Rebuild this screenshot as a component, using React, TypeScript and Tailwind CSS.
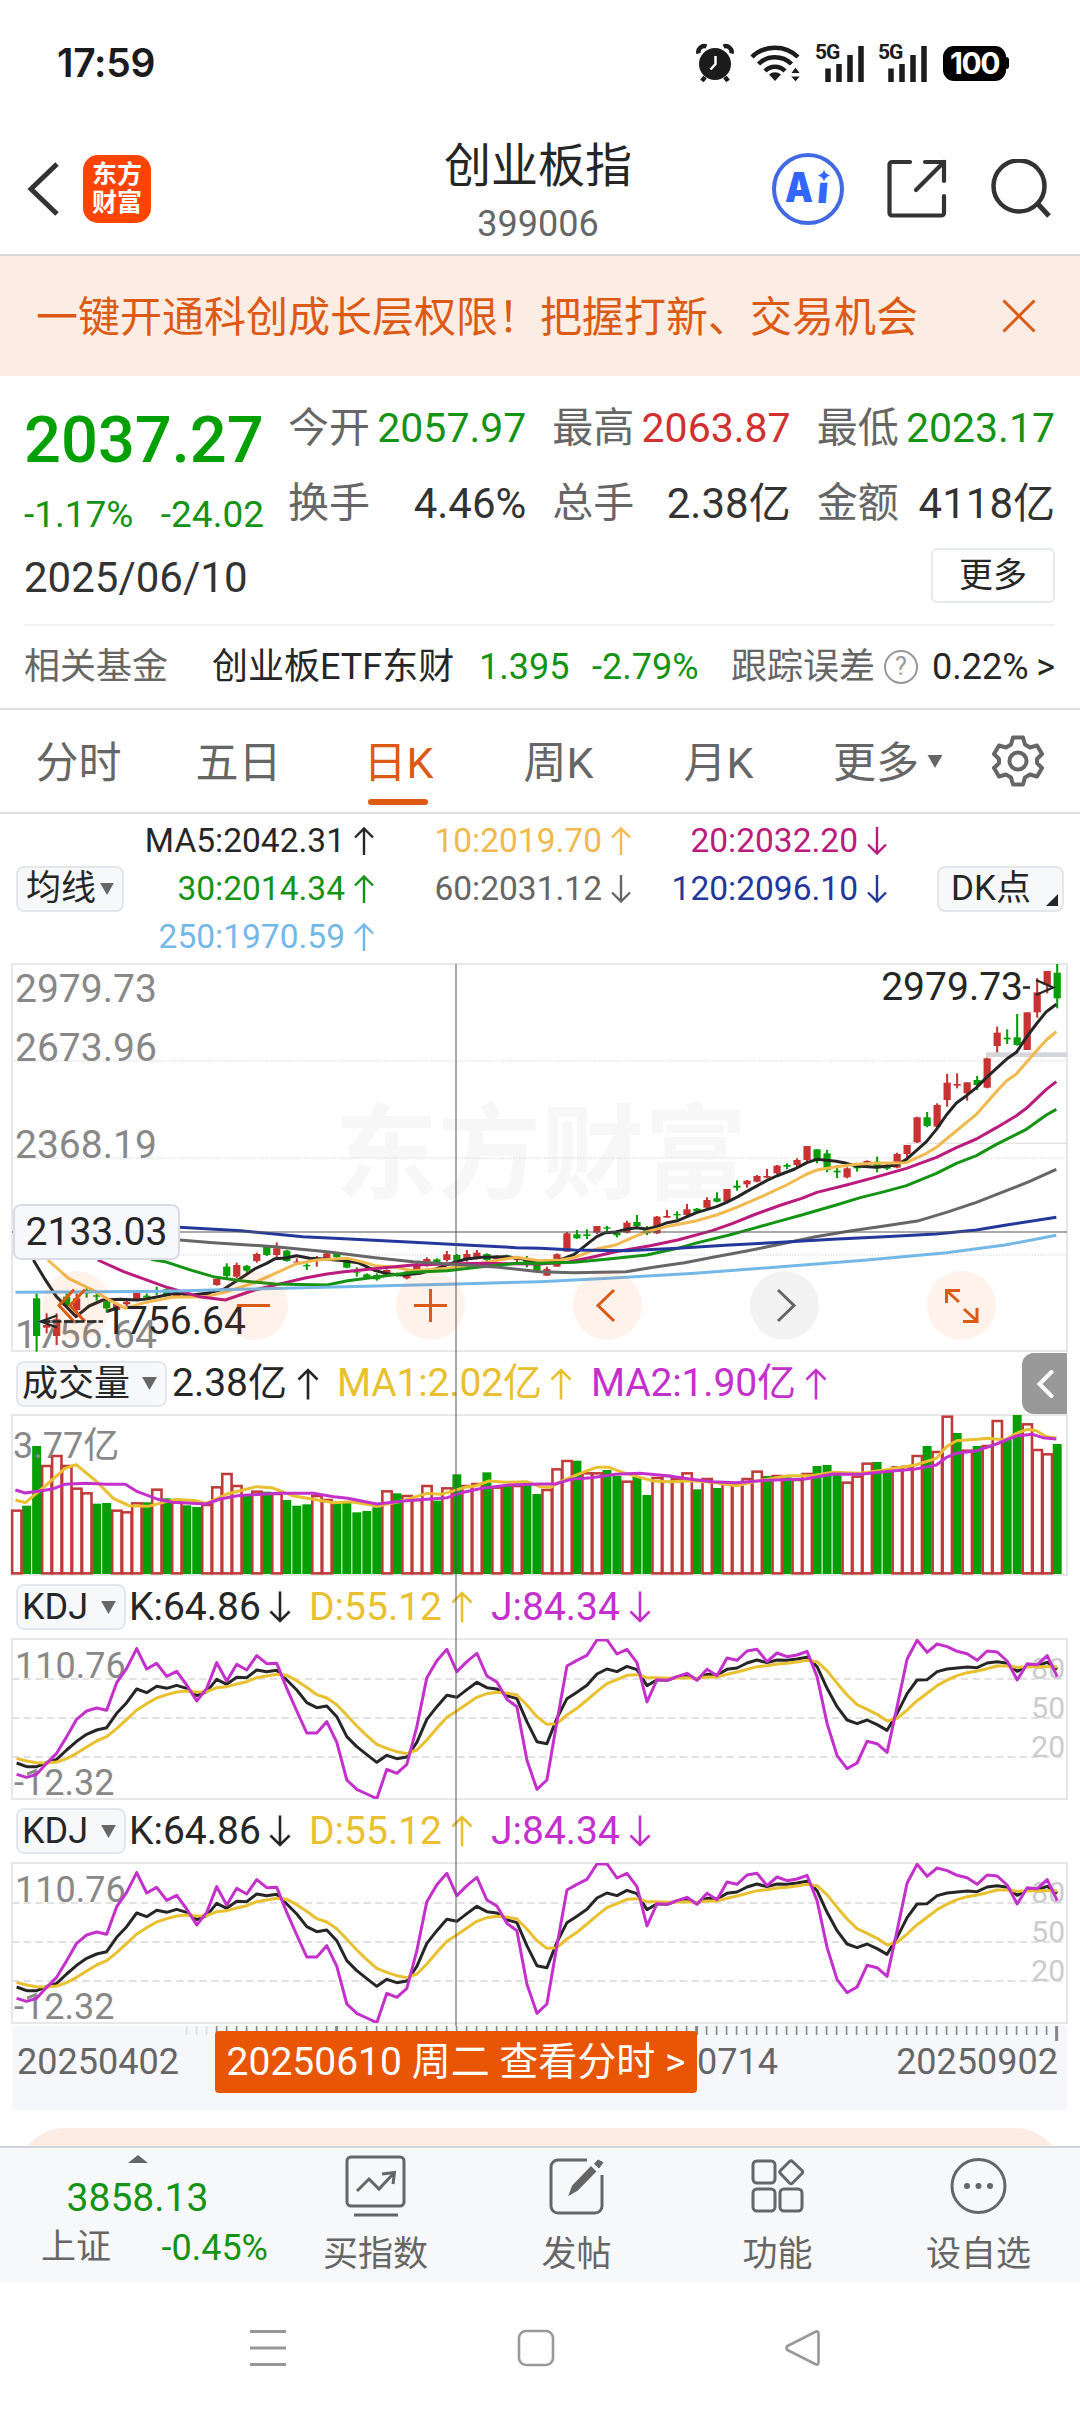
import type { ReactNode } from 'react'

// Chart coordinates: one trading day every STEP units, first day at X0.
// HALF is where the second half of the hand-kept line data starts.
const X0 = 49.4
const STEP = 29.04
const HALF = 1568

const xAt = (i: number) => X0 + STEP * i

type Candle = [up: 0 | 1, top: number, bottom: number, high: number, low: number]

// first candle is day 2
const CANDLES: Candle[] = [
  [0, 1045, 1158, 1030, 1205], [1, 1125, 1133, 1090, 1150], [1, 1108, 1158, 1090, 1185], [0, 1040, 1068, 1030, 1070],
  [1, 1045, 1080, 1030, 1090], [0, 1020, 1030, 1015, 1043], [0, 1036, 1040, 1030, 1052], [0, 1055, 1075, 1048, 1088],
  [1, 1062, 1080, 1062, 1080], [1, 1055, 1063, 1048, 1070], [1, 1028, 1052, 1028, 1052], [0, 1037, 1042, 1030, 1048],
  [0, 1020, 1023, 1010, 1035], [0, 1018, 1032, 1015, 1035], [1, 1030, 1038, 1030, 1040], [1, 1032, 1040, 1032, 1040],
  [1, 1036, 1044, 1036, 1044], [1, 1028, 1036, 1028, 1038], [1, 987, 1005, 985, 1007], [0, 950, 978, 940, 988],
  [1, 945, 980, 938, 985], [0, 948, 962, 945, 968], [1, 912, 933, 908, 938], [0, 890, 915, 888, 918],
  [1, 895, 915, 877, 922], [0, 902, 933, 900, 935], [1, 935, 938, 925, 942], [0, 945, 949, 940, 960],
  [1, 928, 932, 918, 950], [1, 910, 924, 905, 928], [0, 910, 922, 910, 924], [0, 930, 953, 928, 955],
  [0, 965, 968, 952, 980], [0, 973, 982, 970, 987], [0, 975, 988, 970, 992], [1, 960, 978, 958, 980],
  [0, 970, 978, 968, 980], [1, 965, 985, 962, 988], [1, 942, 962, 940, 966], [1, 927, 948, 922, 950],
  [0, 928, 940, 925, 945], [1, 913, 930, 903, 935], [0, 915, 935, 912, 938], [1, 912, 928, 900, 935],
  [1, 908, 922, 900, 928], [0, 912, 930, 910, 934], [1, 918, 928, 916, 930], [0, 916, 922, 914, 926],
  [1, 922, 930, 918, 938], [0, 925, 945, 918, 952], [0, 935, 965, 930, 968], [1, 957, 977, 950, 978],
  [1, 913, 950, 910, 950], [1, 850, 905, 846, 905], [0, 853, 865, 840, 867], [0, 853, 858, 838, 867],
  [1, 828, 848, 828, 852], [0, 832, 836, 828, 845], [0, 848, 856, 840, 862], [1, 818, 848, 812, 850],
  [0, 816, 828, 795, 835], [0, 835, 850, 828, 855], [1, 800, 850, 798, 852], [1, 798, 803, 780, 803],
  [0, 792, 796, 784, 808], [1, 778, 795, 762, 802], [0, 776, 785, 774, 787], [1, 750, 773, 742, 775],
  [0, 745, 755, 727, 757], [1, 717, 755, 717, 757], [0, 707, 713, 691, 722], [1, 692, 703, 690, 713],
  [1, 678, 695, 675, 697], [1, 678, 683, 657, 685], [1, 647, 670, 645, 672], [0, 645, 650, 640, 657],
  [1, 630, 645, 625, 655], [1, 588, 630, 588, 636], [0, 598, 630, 598, 640], [0, 610, 660, 600, 667],
  [0, 662, 667, 645, 684], [1, 655, 682, 652, 685], [0, 645, 655, 642, 665], [1, 633, 645, 631, 648],
  [0, 635, 655, 620, 667], [0, 645, 656, 642, 660], [1, 612, 653, 608, 655], [1, 585, 612, 585, 630],
  [1, 502, 577, 500, 579], [0, 502, 528, 486, 532], [1, 465, 530, 460, 532], [1, 398, 450, 372, 470],
  [1, 402, 407, 370, 415], [1, 397, 430, 397, 452], [0, 390, 405, 378, 420], [1, 325, 413, 323, 415],
  [1, 248, 288, 230, 307], [0, 263, 268, 238, 282], [0, 262, 285, 192, 287], [1, 187, 300, 187, 300],
  [1, 127, 187, 85, 203], [1, 63, 105, 63, 130], [0, 68, 145, 42, 175],
]

const MA_LINES: { color: string; left: number[]; right: number[] }[] = [
  {
    color: '#262626',
    left: [98, 930, 130, 985, 165, 1040, 222, 1100, 260, 1068, 300, 1050, 350, 1048, 400, 1050, 430, 1046, 510, 1030, 560, 1035, 600, 1030, 650, 1018, 700, 985, 740, 957, 775, 940, 800, 926, 830, 924, 862, 917, 900, 925, 950, 928, 1000, 932, 1040, 938, 1090, 962, 1130, 972, 1170, 975, 1220, 970, 1270, 955, 1310, 940, 1355, 927, 1400, 922, 1470, 920, 1510, 925, 1568, 940],
    right: [40, 935, 70, 925, 100, 913, 140, 880, 165, 860, 190, 848, 220, 846, 250, 838, 280, 833, 310, 837, 340, 830, 370, 818, 400, 812, 455, 788, 513, 770, 542, 757, 575, 740, 600, 725, 658, 692, 687, 678, 740, 657, 775, 638, 804, 628, 860, 634, 890, 640, 920, 648, 977, 652, 1035, 645, 1064, 628, 1122, 575, 1151, 538, 1180, 495, 1209, 459, 1238, 437, 1267, 413, 1296, 383, 1354, 328, 1383, 307, 1412, 262, 1441, 222, 1470, 185, 1499, 163],
  },
  {
    color: '#f1b94f',
    left: [140, 930, 200, 985, 270, 1020, 310, 1045, 365, 1075, 420, 1058, 500, 1042, 600, 1040, 660, 1025, 740, 998, 800, 970, 860, 942, 920, 930, 1010, 925, 1050, 935, 1090, 947, 1150, 952, 1200, 962, 1300, 955, 1400, 940, 1450, 930, 1500, 922, 1568, 932],
    right: [60, 930, 100, 923, 165, 897, 220, 885, 270, 862, 310, 845, 380, 827, 455, 812, 513, 795, 571, 772, 650, 737, 716, 705, 775, 672, 804, 660, 861, 650, 920, 643, 970, 640, 1064, 638, 1122, 610, 1151, 592, 1180, 567, 1267, 493, 1325, 425, 1354, 393, 1383, 372, 1441, 303, 1470, 270, 1499, 245],
  },
  {
    color: '#ba1b7c',
    left: [285, 930, 360, 965, 480, 1010, 580, 1040, 655, 1050, 740, 1020, 820, 1000, 890, 983, 950, 972, 1000, 965, 1100, 955, 1200, 945, 1300, 942, 1400, 940, 1568, 942],
    right: [80, 937, 150, 922, 220, 905, 320, 887, 400, 870, 500, 842, 560, 820, 620, 795, 700, 765, 760, 745, 804, 727, 890, 705, 970, 683, 1064, 655, 1151, 622, 1209, 593, 1267, 567, 1325, 533, 1383, 497, 1412, 475, 1470, 418, 1499, 395],
  },
  {
    color: '#159315',
    left: [440, 928, 480, 935, 560, 962, 620, 980, 700, 992, 800, 1002, 950, 1005, 1010, 992, 1100, 980, 1200, 967, 1300, 962, 1400, 950, 1500, 940, 1568, 940],
    right: [100, 937, 200, 927, 310, 915, 400, 895, 450, 880, 550, 855, 620, 835, 690, 815, 760, 795, 860, 765, 930, 743, 1000, 725, 1064, 707, 1151, 670, 1209, 640, 1267, 617, 1325, 583, 1383, 553, 1412, 538, 1470, 495, 1499, 478],
  },
  {
    color: '#666666',
    left: [522, 870, 620, 878, 800, 890, 950, 905, 1090, 923, 1200, 935, 1350, 945, 1450, 952, 1568, 965],
    right: [100, 968, 250, 965, 330, 952, 420, 938, 510, 920, 600, 903, 700, 882, 800, 860, 900, 843, 1000, 828, 1100, 812, 1180, 787, 1267, 757, 1354, 722, 1420, 695, 1499, 658],
  },
  {
    color: '#24389c',
    left: [522, 832, 700, 842, 880, 860, 1000, 866, 1200, 877, 1350, 885, 1500, 893, 1568, 895],
    right: [100, 900, 250, 902, 400, 895, 550, 885, 700, 877, 850, 868, 1000, 860, 1150, 852, 1267, 840, 1354, 825, 1499, 802],
  },
  {
    color: '#74b8e8',
    left: [46, 1027, 300, 1025, 480, 1024, 700, 1018, 1000, 1010, 1300, 1003, 1568, 995],
    right: [200, 985, 450, 970, 700, 950, 950, 930, 1180, 908, 1350, 885, 1499, 856],
  },
]

// volume bar tops, negative = falling day
const VOLUME = [
  482, -467, -288, 348, 318, 348, 416, 430, -461, -459, 482, 487, 460, -457, 419, -445, 457, -466, -471, 465, 412, 372,
  408, -435, 425, -425, 432, -450, -467, -463, 438, 450, -458, -457, -487, -483, -472, 424, -430, 438, 450, 408, -452,
  415, -373, 408, 402, -367, 413, -405, 408, -395, -432, 420, 358, 333, -332, 370, 370, -360, -378, 395, -380, -435,
  384, 378, 388, 370, -418, 387, -414, 402, 402, 387, 365, -378, 378, -382, 390, 372, -348, -345, -375, 398, 380, 341,
  -336, -358, 352, 350, 318, -288, 306, 200, -249, 302, -288, 288, 213, -268, -195, 223, 300, 313, -282,
]

const VOLUME_LINES = [
  {
    color: '#e8c030',
    left: [46, 450, 75, 458, 130, 410, 190, 355, 222, 344, 280, 393, 330, 445, 375, 467, 430, 469, 510, 448, 570, 452, 600, 460, 660, 432, 745, 410, 790, 413, 850, 437, 970, 458, 1020, 455, 1095, 468, 1160, 455, 1200, 443, 1240, 430, 1280, 433, 1310, 425, 1350, 412, 1380, 408, 1420, 393, 1470, 397, 1530, 395, 1568, 410],
    right: [30, 412, 60, 395, 130, 365, 165, 352, 200, 352, 240, 367, 290, 382, 330, 393, 380, 395, 440, 392, 500, 397, 570, 407, 620, 395, 720, 377, 790, 377, 850, 367, 930, 370, 1000, 360, 1090, 345, 1151, 325, 1180, 290, 1209, 272, 1270, 268, 1300, 265, 1350, 270, 1383, 250, 1415, 238, 1441, 242, 1470, 260, 1499, 263],
  },
  {
    color: '#c430cc',
    left: [46, 420, 75, 429, 150, 418, 190, 403, 250, 400, 310, 403, 365, 403, 400, 425, 460, 448, 500, 457, 600, 462, 640, 447, 690, 437, 810, 430, 910, 430, 970, 440, 1010, 445, 1095, 462, 1180, 452, 1240, 448, 1300, 443, 1340, 428, 1400, 415, 1480, 405, 1568, 402],
    right: [45, 402, 90, 388, 150, 383, 220, 373, 290, 370, 370, 377, 440, 388, 500, 395, 570, 398, 640, 392, 770, 387, 850, 372, 930, 373, 1000, 365, 1090, 357, 1151, 345, 1180, 322, 1209, 310, 1270, 302, 1325, 282, 1383, 258, 1430, 253, 1460, 263, 1499, 267],
  },
]

const KDJ_LINES = [
  {
    color: '#262626',
    ys: [549, 560, 560, 548, 538, 510, 484, 463, 450, 443, 400, 368, 327, 338, 319, 325, 316, 325, 347, 335, 298, 313, 292, 293, 270, 275, 271, 300, 330, 368, 383, 378, 410, 470, 500, 524, 547, 526, 536, 531, 487, 418, 380, 346, 352, 329, 307, 323, 327, 347, 356, 425, 485, 491, 415, 356, 337, 316, 282, 267, 275, 259, 269, 317, 299, 301, 291, 286, 298, 283, 285, 268, 264, 249, 240, 248, 240, 241, 237, 232, 260, 325, 380, 420, 431, 420, 434, 451, 400, 341, 300, 299, 275, 267, 264, 261, 263, 249, 245, 250, 274, 258, 257, 247, 268],
  },
  {
    color: '#e8c030',
    ys: [535, 543, 548, 549, 546, 536, 520, 501, 483, 470, 446, 418, 390, 371, 354, 344, 336, 333, 336, 335, 323, 320, 312, 305, 293, 288, 283, 286, 302, 322, 344, 354, 374, 406, 438, 467, 493, 505, 515, 521, 510, 480, 445, 412, 393, 372, 352, 341, 337, 339, 345, 375, 410, 433, 431, 405, 385, 360, 335, 311, 299, 286, 284, 293, 293, 295, 294, 293, 295, 291, 291, 283, 276, 268, 260, 257, 252, 250, 246, 241, 245, 272, 310, 345, 374, 388, 403, 423, 415, 390, 362, 340, 317, 300, 287, 278, 273, 266, 258, 258, 262, 261, 260, 260, 260],
  },
  {
    color: '#c430cc',
    ys: [583, 592, 583, 550, 520, 470, 418, 393, 384, 391, 308, 265, 206, 267, 250, 289, 274, 315, 363, 325, 248, 303, 253, 270, 227, 251, 250, 325, 393, 459, 459, 425, 487, 600, 628, 642, 656, 568, 580, 553, 440, 293, 242, 208, 275, 245, 220, 288, 306, 358, 380, 540, 628, 600, 425, 258, 241, 226, 180, 179, 222, 208, 248, 366, 299, 301, 290, 280, 301, 268, 287, 234, 241, 213, 208, 245, 219, 230, 225, 214, 290, 430, 527, 566, 549, 484, 491, 517, 380, 237, 181, 217, 192, 200, 214, 221, 241, 213, 216, 243, 300, 251, 254, 227, 290],
  },
]

const pair = (values: number[], shift: number) =>
  values.map((v, i) => (i % 2 === 0 ? v + shift : v)).join(' ')

function Line({ points, color }: { points: string; color: string }) {
  return (
    <polyline
      points={points}
      fill="none"
      stroke={color}
      strokeWidth="3"
      strokeLinejoin="round"
      vectorEffect="non-scaling-stroke"
    />
  )
}

function Arrow({ down = false }: { down?: boolean }) {
  return (
    <svg viewBox="0 0 22 32" className="h-8 w-[22px] shrink-0" fill="none" stroke="currentColor" strokeWidth="2.6">
      <path d={down ? 'M11 0.5V30M1.5 20.5L11 30L20.500 20.5' : 'M11 31.5V2M1.500 11.5L11 2L20.500 11.5'} />
    </svg>
  )
}

function StatusBar() {
  return (
    <div className="flex h-[126px] items-center pl-[57px] pr-[71px] text-[#1c1c1c]">
      <span className="font-['Inter'] text-[39px] font-semibold tracking-[-0.3px]">17:59</span>
      <svg viewBox="0 0 38 40" className="ml-auto h-10 w-[38px]">
        <circle cx="19" cy="21" r="16" fill="#1c1c1c" />
        <path d="M2.500 10.500a6 6 0 0 1 8-7M35.500 10.500a6 6 0 0 0-8-7M9 34l-3 4M29 34l3 4" stroke="#1c1c1c" strokeWidth="4.500" fill="none" />
        <path d="M19.500 13v8l-5 5.500" stroke="#fff" strokeWidth="2.500" fill="none" />
      </svg>
      <svg viewBox="0 0 52 40" className="ml-4 h-10 w-[52px]" fill="none" stroke="#1c1c1c" strokeWidth="4.500">
        <path d="M2 14a33 33 0 0 1 46 0M8.500 21a23.500 23.500 0 0 1 33 0M15 28a14 14 0 0 1 20 0" />
        <path d="M25 38l-6-6.500a9 9 0 0 1 12 0z" fill="#1c1c1c" stroke="none" />
        <path d="M45.500 24l5 6.500h-10zM45.500 39l5-6h-10z" fill="#1c1c1c" stroke="#fff" strokeWidth="1" />
      </svg>
      {[0, 1].map((n) => (
        <div key={n} className="relative ml-[13px] h-10 w-[50px]">
          <span className="absolute left-0 top-0 font-['Roboto'] text-[21px] font-bold leading-[18px] tracking-[-1px]">5G</span>
          <svg viewBox="0 0 50 40" className="h-10 w-[50px]" stroke="#1c1c1c" strokeWidth="5.500">
            <path d="M13 25.500v13.500M24 21v18M35 12v27M46 3v36" />
          </svg>
        </div>
      ))}
      <div className="ml-[15px] flex h-[35px] w-[63px] items-center justify-center rounded-[11px] bg-black font-['Inter'] text-[30px] font-bold tracking-[-1.5px] text-white">
        100
      </div>
      <div className="h-3 w-[3px] rounded-r bg-black" />
    </div>
  )
}

function Header() {
  return (
    <div className="flex h-[129px] items-center pb-1 pl-[27px] pr-[29px] text-[#333]">
      <svg viewBox="0 0 32 54" className="h-[54px] w-8" fill="none" stroke="#333" strokeWidth="5">
        <path d="M30 2L4 27L30 52" />
      </svg>
      <div className="ml-6 flex h-[68px] w-[68px] flex-col items-center justify-center rounded-[15px] bg-[#ff4400] text-[25px] font-bold leading-[28px] text-white">
        <span>东方</span>
        <span>财富</span>
      </div>
      <div className="ml-[237px] w-[300px] pt-2 text-center">
        <div className="text-[47px] leading-[56px] text-[#262626]">创业板指</div>
        <div className="mt-[6px] text-[36px] leading-[48px] text-[#666]">399006</div>
      </div>
      <svg viewBox="0 0 74 74" className="ml-auto h-[74px] w-[74px] font-['Inter'] font-black">
        <circle cx="37" cy="37" r="34" fill="none" stroke="#4169e1" strokeWidth="4" />
        <g fill="#3366ff" fontSize="41">
          <text x="14" y="50" textLength="28" lengthAdjust="spacingAndGlyphs">A</text>
          <text x="55.500" y="51" fontSize="37" transform="skewX(-5)" textAnchor="middle">ı</text>
        </g>
        <path d="M53 17.500q1 4.500 6 6q-5 1.500-6 6q-1-4.500-6-6q5-1.500 6-6z" fill="#3366ff" />
      </svg>
      <svg viewBox="0 0 60 60" className="ml-[42px] h-[60px] w-[60px]" fill="none" stroke="#333" strokeWidth="4.200" strokeLinecap="round">
        <path d="M23 3H5a2.500 2.500 0 0 0-2.500 2.500V54a2.500 2.500 0 0 0 2.500 2.500H54.500a2.500 2.500 0 0 0 2.500-2.500V37M38 3H57V22M57 3L29 31" />
      </svg>
      <svg viewBox="0 0 60 60" className="ml-[44px] h-[60px] w-[60px]" fill="none" stroke="#333" strokeWidth="4.500">
        <circle cx="28" cy="27" r="25.500" />
        <path d="M46 44L58 57" strokeWidth="5" />
      </svg>
    </div>
  )
}

function Stat({ label, value, color }: { label: string; value: string; color: string }) {
  return (
    <div className="flex items-center justify-between">
      <span className="text-[41px] text-[#666]">{label}</span>
      <span className={color}>{value}</span>
    </div>
  )
}

function Quote() {
  return (
    <div className="h-[334px] border-b-2 border-[#dcdcdc] pl-[24px] pr-[25px]">
      <div className="flex h-[172px] pt-[15px]">
        <div className="w-[240px] shrink-0 text-[#00a000]">
          <div className="pt-px text-[65px] font-medium leading-[96px]">2037.27</div>
          <div className="flex justify-between text-[37px] leading-[54px] text-[#159315]">
            <span>-1.17%</span>
            <span>-24.02</span>
          </div>
        </div>
        <div className="ml-[24px] grid grow grid-cols-3 grid-rows-[75px_75px] gap-x-[26px]">
          <Stat label="今开" value="2057.97" color="text-[41px] text-[#159315]" />
          <Stat label="最高" value="2063.87" color="text-[41px] text-[#d03030]" />
          <Stat label="最低" value="2023.17" color="text-[41px] text-[#159315]" />
          <Stat label="换手" value="4.46%" color="text-[42px] text-[#333]" />
          <Stat label="总手" value="2.38亿" color="text-[42px] text-[#333]" />
          <Stat label="金额" value="4118亿" color="text-[42px] text-[#333]" />
        </div>
      </div>
      <div className="flex h-[54px] items-center justify-between">
        <span className="pt-1 text-[42px] text-[#333]">2025/06/10</span>
        <span className="flex h-[55px] w-[124px] items-center justify-center rounded-md border-2 border-[#e6eaee] text-[34px] text-[#262626]">
          更多
        </span>
      </div>
      <div className="mt-[22px] flex h-[84px] items-center border-t-2 border-[#f2f2f2] text-[36px] text-[#262626]">
        <span className="w-[188px] text-[#666]">相关基金</span>
        <span className="w-[267px]">创业板ETF东财</span>
        <span className="w-[113px] text-[#159315]">1.395</span>
        <span className="w-[139px] text-[#159315]">-2.79%</span>
        <span className="text-[#666]">跟踪误差</span>
        <span className="ml-[9px] flex h-[34px] w-[34px] items-center justify-center rounded-full border-[2.5px] border-[#999] text-[25px] text-[#999]">
          ?
        </span>
        <span className="ml-[14px]">0.22%</span>
        <span className="ml-auto">&gt;</span>
      </div>
    </div>
  )
}

function Tabs() {
  return (
    <div className="relative flex h-[104px] items-center border-b-2 border-[#dcdcdc] text-[43px] text-[#666]">
      {['分时', '五日', '日K', '周K', '月K'].map((tab) => (
        <div
          key={tab}
          className={`relative flex h-full w-[160px] items-center justify-center pr-[3px] pt-[5px] ${tab === '日K' ? 'text-[#dd5a14]' : ''}`}
        >
          {tab}
          {tab === '日K' && <span className="absolute bottom-[7px] left-[48px] h-[6px] w-[60px] rounded-full bg-[#dd5a14]" />}
        </div>
      ))}
      <span className="ml-[33px] pt-[5px]">更多</span>
      <svg viewBox="0 0 16 14" className="ml-2 h-[13px] w-4">
        <path d="M0 0H16L8 14z" fill="#666" />
      </svg>
      <svg viewBox="0 0 52 52" className="ml-[49px] h-[52px] w-[52px]" fill="none" stroke="#666" strokeWidth="4" strokeLinejoin="round">
        <path d="M21 2.500H31L33 9.500L38 12.500L45 10.500L50 19L45 24V28L50 33L45 41.500L38 39.500L33 42.500L31 49.500H21L19 42.500L14 39.500L7 41.500L2 33L7 28V24L2 19L7 10.500L14 12.500L19 9.500z" />
        <circle cx="26" cy="26" r="8.500" />
      </svg>
    </div>
  )
}

function MaItem({ children, down, color }: { children: ReactNode; down?: boolean; color: string }) {
  return (
    <div className={`flex h-12 items-center justify-end gap-[9px] ${color}`}>
      <span>{children}</span>
      <svg viewBox="0 0 20 28" className="h-7 w-5" fill="none" stroke="currentColor" strokeWidth="2.4">
        <path d={down ? 'M10 0V26.500M1 17.500L10 26.500L19 17.500' : 'M10 28V1.500M1 10.500L10 1.500L19 10.500'} />
      </svg>
    </div>
  )
}

function MaLegend() {
  return (
    <div className="flex h-[150px] items-center pl-4 text-[33.5px]">
      <div className="flex h-[46px] w-[108px] items-center justify-center gap-1 rounded-lg border-2 border-[#e3e7ec] bg-[#f6f8fa] text-[35px] text-[#262626]">
        均线
        <svg viewBox="0 0 16 14" className="h-3 w-[14px]">
          <path d="M0 0H16L8 14z" fill="#666" />
        </svg>
      </div>
      <div className="grid grid-cols-[250px_257px_256px]">
        <MaItem color="text-[#262626]">MA5:2042.31</MaItem>
        <MaItem color="text-[#f1b94f]">10:2019.70</MaItem>
        <MaItem color="text-[#ba1b7c]" down>20:2032.20</MaItem>
        <MaItem color="text-[#159315]">30:2014.34</MaItem>
        <MaItem color="text-[#666]" down>60:2031.12</MaItem>
        <MaItem color="text-[#24389c]" down>120:2096.10</MaItem>
        <MaItem color="text-[#74b8e8]">250:1970.59</MaItem>
      </div>
      <div className="relative ml-[50px] flex h-[46px] w-[127px] items-center rounded-lg border-2 border-[#e3e7ec] bg-[#f6f8fa] pl-3 text-[35px] text-[#262626]">
        DK点
        <svg viewBox="0 0 12 12" className="absolute bottom-1 right-1 h-3 w-3">
          <path d="M12 0V12H0z" fill="#262626" />
        </svg>
      </div>
    </div>
  )
}

const CIRCLES = [
  { id: 'fast', tint: 'bg-[#ff5500]/8 text-[#dd5a14]', d: 'M32 18.500L17 34.500L32 50.500M43 18.500L28 34.500L43 50.500' },
  { id: 'minus', tint: 'bg-[#ff5500]/8 text-[#dd5a14]', d: 'M18 34.500H51' },
  { id: 'plus', tint: 'bg-[#ff5500]/8 text-[#dd5a14]', d: 'M18 34.500H51M34.500 18V51' },
  { id: 'prev', tint: 'bg-[#ff5500]/8 text-[#dd5a14]', d: 'M41 19L25 34.500L41 50' },
  { id: 'next', tint: 'bg-black/5 text-[#666]', d: 'M28 19L44 34.500L28 50' },
  { id: 'full', tint: 'bg-[#ff5500]/8 text-[#dd5a14]', d: 'M19.500 32V19.500H33M19.500 19.500L32 31M37 38L50 50M50 37V50.500H36' },
]

function PriceChart() {
  return (
    <div className="relative h-[388px] text-[39px] leading-none">
      <div className="absolute left-[323px] top-[140px] whitespace-nowrap text-[103px] font-bold text-[#f7f7f7]">东方财富</div>
      <svg viewBox="36 42 3062 1161" preserveAspectRatio="none" className="absolute left-0 top-0 h-[387px] w-[1055px] overflow-visible">
        <rect x="36" y="42" width="3062" height="1161" fill="none" stroke="#e4e4e4" strokeWidth="5" />
        <path d="M36 333H3098M36 624H3098M36 915H3098" stroke="#e2e2e2" strokeWidth="4" strokeDasharray="4 4" />
        <path d="M2633 580H3098" stroke="#dadada" strokeWidth="3" />
        <rect x="2863" y="307" width="235" height="14" fill="#d3d6da" />
        {CANDLES.map(([up, top, bottom, high, low], n) => {
          const x = xAt(n + 2)
          return (
            <g key={n} fill={up ? '#c83232' : '#059f05'}>
              <rect x={x - 3} y={high} width="6" height={low - high} />
              <rect x={x - 10.5} y={top} width="21" height={bottom - top} />
            </g>
          )
        })}
        {MA_LINES.map(({ color, left, right }) => (
          <Line key={color} color={color} points={`${pair(left, 0)} ${pair(right, HALF)}`} />
        ))}
      </svg>
      <div className="absolute left-[3px] top-[6px] text-[#888]">2979.73</div>
      <div className="absolute left-[3px] top-[65px] text-[#888]">2673.96</div>
      <div className="absolute left-[3px] top-[162px] text-[#888]">2368.19</div>
      <div className="absolute left-[3px] top-[352px] text-[#888]">1756.64</div>
      <div className="absolute left-[92px] top-[338px] text-[#262626]">1756.64</div>
      <div className="absolute right-[44px] top-[4px] text-[#262626]">2979.73</div>
      <div className="absolute left-0 top-[267px] h-[2px] w-[1055px] bg-[#555]/50" />
      <div className="absolute left-px top-[240px] flex h-[56px] w-[167px] items-center justify-center rounded-lg border-2 border-[#d8dde5] bg-[#f6f8fc] text-[#262626]">
        2133.03
      </div>
      <div className="absolute left-[30px] top-[307px] flex gap-[108px]">
        {CIRCLES.map(({ id, tint, d }) => (
          <div key={id} className={`h-[69px] w-[69px] rounded-full ${tint}`}>
            <svg viewBox="0 0 69 69" fill="none" stroke="currentColor" strokeWidth="3">
              <path d={d} />
            </svg>
          </div>
        ))}
      </div>
      {/* pointers to the lowest and highest price */}
      <svg viewBox="0 0 1055 387" className="absolute left-0 top-0 h-[387px] w-[1055px]" fill="none" stroke="#262626" strokeWidth="2.4">
        <path d="M45 351.500L29 357.500L45 363.500" />
        <path d="M29 357.500H91" strokeDasharray="9 2.500" />
        <path d="M1011 23.500H1018M1024 16L1041 23.500L1024 31" />
      </svg>
    </div>
  )
}

function Picker({ children, width }: { children: ReactNode; width: string }) {
  return (
    <div className={`flex h-[46px] items-center justify-between rounded-lg border-2 border-[#e3e7ec] bg-[#f6f8fa] pl-[4px] pr-2 text-[36px] text-[#262626] ${width}`}>
      {children}
      <svg viewBox="0 0 16 14" className="h-[13px] w-[15px]">
        <path d="M0 0H16L8 14z" fill="#666" />
      </svg>
    </div>
  )
}

function VolumeChart() {
  const bars = VOLUME.map((v, i) => ({ x: xAt(i), top: Math.abs(v), up: v > 0 }))
  return (
    <>
      <div className="flex h-[63px] items-center pl-1 text-[39px]">
        <Picker width="w-[151px]">成交量</Picker>
        <div className="ml-[5px] flex w-[165px] items-center gap-[10px] text-[#262626]">2.38亿<Arrow /></div>
        <div className="flex w-[254px] items-center gap-[8px] tracking-[-0.15px] text-[#e8c030]">MA1:2.02亿<Arrow /></div>
        <div className="flex items-center gap-[9px] tracking-[-0.15px] text-[#c430cc]">MA2:1.90亿<Arrow /></div>
        <div className="ml-auto flex h-[61px] w-[45px] items-center justify-center rounded-l-xl bg-[#999]">
          <svg viewBox="0 0 18 30" className="h-[30px] w-[18px]" fill="none" stroke="#fff" strokeWidth="4" strokeLinecap="round">
            <path d="M15.500 3L3.500 15L15.500 27" />
          </svg>
        </div>
      </div>
      <div className="relative h-[160px]">
        <svg viewBox="36 195 3062 480" preserveAspectRatio="none" className="absolute left-0 top-0 h-[160px] w-[1055px] overflow-visible">
          <rect x="36" y="195" width="3062" height="480" fill="none" stroke="#e4e4e4" strokeWidth="5" />
          {bars.filter((b) => !b.up).map((b) => (
            <rect key={b.x} x={b.x - 13} y={b.top} width="26" height={672 - b.top} fill="#059f05" />
          ))}
          {bars.filter((b) => b.up).map((b) => (
            <rect key={b.x} x={b.x - 13} y={b.top} width="27" height={670 - b.top} fill="#fff" stroke="#bf3a38" strokeWidth="7.5" />
          ))}
          {VOLUME_LINES.map(({ color, left, right }) => (
            <Line key={color} color={color} points={`${pair(left, 0)} ${pair(right, HALF)}`} />
          ))}
        </svg>
        <div className="absolute left-px top-[13px] text-[36px] leading-none text-[#888]">3.77亿</div>
      </div>
    </>
  )
}

function KdjChart() {
  return (
    <>
      <div className="flex h-[64px] items-center pl-1 text-[39px]">
        <Picker width="w-[110px]">KDJ</Picker>
        <div className="ml-[3px] flex w-[180px] items-center gap-[8px] text-[#262626]">K:64.86<Arrow down /></div>
        <div className="flex w-[182px] items-center gap-[9px] text-[#e8c030]">D:55.12<Arrow /></div>
        <div className="flex items-center gap-[9px] text-[#c430cc]">J:84.34<Arrow down /></div>
      </div>
      <div className="relative h-[160px] text-[36px] leading-none">
        <svg viewBox="36 177 3062 480" preserveAspectRatio="none" className="absolute left-0 top-0 h-[160px] w-[1055px] overflow-visible">
          <rect x="36" y="177" width="3062" height="480" fill="none" stroke="#e4e4e4" strokeWidth="5" />
          <path d="M36 297H3098M36 414H3098M36 531H3098" stroke="#e2e2e2" strokeWidth="5.5" strokeDasharray="21 13" />
        </svg>
        <div className="absolute left-[3px] top-[9px] text-[#888]">110.76</div>
        <div className="absolute left-[2px] top-[126px] text-[#888]">-12.32</div>
        <div className="absolute right-[2px] top-[10px] text-[30px] leading-[39px] text-[#ccc]">
          <div>80</div>
          <div>50</div>
          <div>20</div>
        </div>
        <svg viewBox="36 177 3062 480" preserveAspectRatio="none" className="absolute left-0 top-0 h-[160px] w-[1055px]">
          {KDJ_LINES.map(({ color, ys }) => (
            <Line key={color} color={color} points={ys.map((y, i) => `${xAt(i)},${y}`).join(' ')} />
          ))}
        </svg>
      </div>
    </>
  )
}

function DateAxis() {
  const ticks = Array.from({ length: 88 }, (_, n) => n + 17)
  return (
    <div className="relative mt-[3px] h-[84px] bg-[#f6f7fa] text-[36px] leading-none text-[#666]">
      <svg viewBox="0 0 1055 16" className="absolute left-0 top-0 h-4 w-[1055px]">
        {ticks.map((i) => {
          const x = 4.6 + 10 * i
          const last = i === 104
          return (
            <path
              key={i}
              d={last ? `M${x} 0V15` : `M${x} 0V9`}
              stroke={i < 20 ? '#ddd' : '#888'}
              strokeWidth={last || i === 32 || i === 68 ? 3 : 1.6}
            />
          )
        })}
      </svg>
      <span className="absolute left-[5px] top-[18px]">20250402</span>
      <span className="absolute left-[604px] top-[18px]">20250714</span>
      <span className="absolute right-[9px] top-[18px]">20250902</span>
      <div className="absolute left-[203px] top-[5px] flex h-[62px] w-[482px] items-center justify-center whitespace-nowrap rounded bg-[#e85504] pt-px text-[39px] text-white">
        20250610 周二 查看分时 &gt;
      </div>
    </div>
  )
}

const NAV: { label: string; icon: ReactNode }[] = [
  {
    label: '买指数',
    icon: (
      <>
        <rect x="2" y="2" width="57" height="49" rx="4" />
        <path d="M12 36L24 24L34 34L49 18M37 19L49.500 17.500L48 29" strokeWidth="3" />
        <path d="M9 60H53" />
      </>
    ),
  },
  {
    label: '发帖',
    icon: (
      <>
        <path d="M41 5H12a7 7 0 0 0-7 7V51a7 7 0 0 0 7 7H49a7 7 0 0 0 7-7V20" />
        <path d="M24 39L27 31L45 12.500L49 16.500L31 35z" fill="currentColor" strokeWidth="2" />
        <path d="M48.500 9L52 5L57 7.500L53 13z" fill="currentColor" strokeWidth="1" />
      </>
    ),
  },
  {
    label: '功能',
    icon: (
      <>
        <rect x="6" y="6" width="22" height="22" rx="4" />
        <rect x="6" y="34" width="22" height="22" rx="4" />
        <rect x="33" y="34" width="22" height="22" rx="4" />
        <path d="M42.500 6.500Q44 5 45.500 6.500L55 15.500Q56.500 17 55 18.500L45.500 28Q44 29.500 42.500 28L33.500 18.500Q32 17 33.500 15.500z" />
      </>
    ),
  },
  {
    label: '设自选',
    icon: (
      <>
        <circle cx="30.500" cy="31" r="26.500" />
        <g fill="currentColor" stroke="none">
          <circle cx="19" cy="31" r="3" />
          <circle cx="30.500" cy="31" r="3" />
          <circle cx="42" cy="31" r="3" />
        </g>
      </>
    ),
  },
]

function BottomBar() {
  return (
    <div className="flex h-[136px] shrink-0 border-t-2 border-[#d2d6da] bg-[#f6f8fa] text-[36px] text-[#666]">
      <div className="flex w-[275px] flex-col items-center pt-[7px]">
        <svg viewBox="0 0 20 8" className="h-2 w-5">
          <path d="M10 0L20 8H0z" fill="#666" />
        </svg>
        <div className="mt-[10px] text-[39px] leading-[50px] text-[#159315]">3858.13</div>
        <div className="flex w-full justify-between pl-[41px] pr-[7px] leading-[50px]">
          <span className="text-[35px]">上证</span>
          <span className="text-[#159315]">-0.45%</span>
        </div>
      </div>
      {NAV.map(({ label, icon }) => (
        <div key={label} className="flex w-[201px] flex-col items-center pt-[7px]">
          <svg viewBox="0 0 61 62" className="h-[62px] w-[61px]" fill="none" stroke="currentColor" strokeWidth="3">
            {icon}
          </svg>
          <span className="mt-[13px] text-[35px] leading-[50px]">{label}</span>
        </div>
      ))}
    </div>
  )
}

function SystemNav() {
  return (
    <div className="flex h-[132px] items-center pl-[249px] text-[#999]">
      <svg viewBox="0 0 38 38" className="h-[38px] w-[38px]" stroke="currentColor" strokeWidth="2.800">
        <path d="M1 2.500H37M1 19H37M1 35.500H37" />
      </svg>
      <svg viewBox="0 0 38 38" className="ml-[230px] h-[38px] w-[38px]" fill="none" stroke="currentColor" strokeWidth="2.600">
        <rect x="2" y="2" width="34" height="34" rx="7" />
      </svg>
      <svg viewBox="0 0 38 38" className="ml-[229px] h-[38px] w-[38px]" fill="none" stroke="currentColor" strokeWidth="2.600" strokeLinejoin="round">
        <path d="M32 2.500L3.500 17Q1.500 19 3.500 21L32 35.500Q34.500 36 34.500 33.500V4.500Q34.500 2 32 2.500z" />
      </svg>
    </div>
  )
}

export default function App() {
  return (
    <div className="flex h-[2414px] w-[1080px] flex-col overflow-hidden bg-white font-['Roboto','Noto_Sans_CJK_SC',sans-serif]">
      <div className="h-[256px] shrink-0 border-b-2 border-[#d8d8d8]">
        <StatusBar />
        <Header />
      </div>
      <div className="flex h-[120px] shrink-0 items-center justify-between bg-[#fcede4] pl-9 pr-11 text-[42px] text-[#dd5a14]">
        <span className="pt-[3px]">一键开通科创成长层权限！把握打新、交易机会</span>
        <svg viewBox="0 0 34 34" className="h-[34px] w-[34px]" stroke="currentColor" strokeWidth="3">
          <path d="M1.500 1.500L32.500 32.500M32.500 1.500L1.500 32.500" />
        </svg>
      </div>
      <Quote />
      <Tabs />
      <MaLegend />
      <div className="relative ml-3 w-[1055px]">
        <PriceChart />
        <VolumeChart />
        <KdjChart />
        <KdjChart />
        <div className="absolute left-[443px] top-0 h-[1067px] w-[2px] bg-[#555]/50" />
        <DateAxis />
      </div>
      <div className="mx-[17px] mt-[18px] h-[18px] shrink-0 overflow-hidden">
        <div className="h-[96px] rounded-[48px] bg-[#fcede4]" />
      </div>
      <BottomBar />
      <SystemNav />
    </div>
  )
}
